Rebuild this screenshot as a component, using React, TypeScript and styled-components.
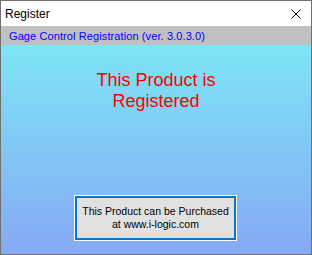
import styled, { createGlobalStyle } from "styled-components";

const Global = createGlobalStyle`
    html, body {
        margin: 0;
        padding: 0;
        background: #ffffff;
    }
`;

const Window = styled.div`
    width: 312px;
    height: 255px;
    box-sizing: border-box;
    border: 1px solid #707070;
    display: flex;
    flex-direction: column;
    font-family: "Liberation Sans", Arial, sans-serif;
    overflow: hidden;
`;

const TitleBar = styled.div`
    height: 25px;
    background: #ffffff;
    display: flex;
    align-items: center;
    justify-content: space-between;
    padding: 0 10px 0 4px;
    flex-shrink: 0;
`;

const Title = styled.span`
    font-size: 12px;
    color: #000000;
`;

const CloseIcon = styled.svg`
    width: 10px;
    height: 10px;
    display: block;
`;

const Banner = styled.div`
    height: 19px;
    background: #c0c0c0;
    display: flex;
    align-items: center;
    padding-left: 8px;
    font-size: 11px;
    letter-spacing: 0.1px;
    color: #0000ff;
    flex-shrink: 0;
`;

const Body = styled.div`
    flex: 1;
    background: linear-gradient(to bottom, #7de5f5, #86a9f5);
    display: flex;
    flex-direction: column;
    align-items: center;
    justify-content: space-between;
    padding: 25px 0 14px;
`;

const Status = styled.div`
    color: #ff0000;
    font-size: 18px;
    line-height: 21px;
    text-align: center;
`;

const PurchaseButton = styled.button`
    width: 161px;
    height: 44px;
    box-sizing: border-box;
    background: #e1e1e1;
    border: 2px solid #0078d7;
    outline: 1px solid #ffffff;
    padding: 0;
    font-family: inherit;
    font-size: 10.5px;
    line-height: 13px;
    color: #000000;
    text-align: center;
    margin-right: 1px;
`;

export default function App() {
    return (
        <Window>
            <Global />
            <TitleBar>
                <Title>Register</Title>
                <CloseIcon viewBox="0 0 10 10">
                    <path d="M0.5 0.5 L9.5 9.5 M9.5 0.5 L0.5 9.5" stroke="#000" strokeWidth="1" />
                </CloseIcon>
            </TitleBar>
            <Banner>Gage Control Registration (ver. 3.0.3.0)</Banner>
            <Body>
                <Status>
                    This Product is
                    <br />
                    Registered
                </Status>
                <PurchaseButton>
                    This Product can be Purchased
                    <br />
                    at www.i-logic.com
                </PurchaseButton>
            </Body>
        </Window>
    );
}
